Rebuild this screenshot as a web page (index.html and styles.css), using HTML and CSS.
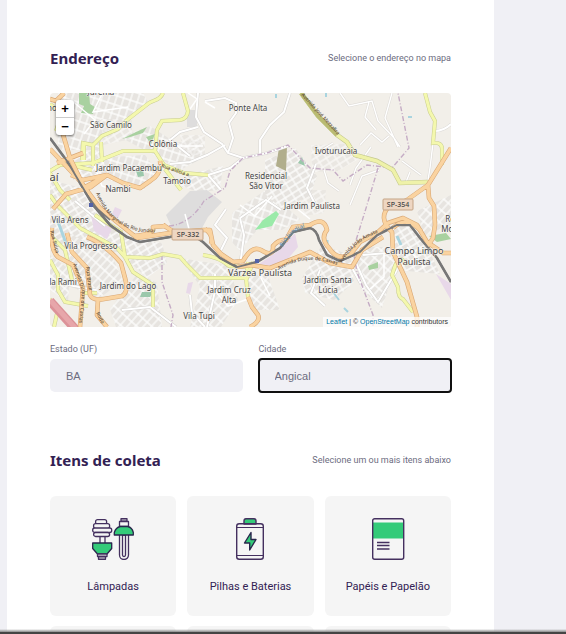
FILE: index.html
```html
<!DOCTYPE html>
<html lang="pt-BR">
<head>
<meta charset="utf-8">
<title>Cadastro do ponto de coleta</title>
<link rel="stylesheet" href="styles.css">
</head>
<body>
<main class="page">
  <form class="form">
    <section>
      <header class="legend">
        <h2>Endereço</h2>
        <span>Selecione o endereço no mapa</span>
      </header>
      <div class="map">
        <svg class="map-canvas" viewBox="50 93 401 234" preserveAspectRatio="xMidYMid slice" role="img" aria-label="Mapa">
          <defs>
            <pattern id="st1" width="7" height="9" patternUnits="userSpaceOnUse" patternTransform="rotate(18)"><rect width="7" height="9" fill="#e5e2de"/><path d="M0 1H7M1 0V9" stroke="#fff" stroke-width="1.3"/></pattern>
            <pattern id="st2" width="8" height="6" patternUnits="userSpaceOnUse" patternTransform="rotate(-32)"><rect width="8" height="6" fill="#e4e1dd"/><path d="M0 1H8M1 0V6" stroke="#fff" stroke-width="1.3"/></pattern>
            <pattern id="st3" width="6" height="10" patternUnits="userSpaceOnUse" patternTransform="rotate(42)"><rect width="6" height="10" fill="#e5e2de"/><path d="M0 1H6M1 0V10" stroke="#fff" stroke-width="1.3"/></pattern>
            <path id="y" d="M163 93C160 101 153 100 149 103L127 120L118 129L102 136L93 145L83 143L82 160M183 93L188 111Q187 119 180 120L162 121L157 130L155 151L123 151L93 163L60 165L50 171M155 151L164 165L184 173L208 175M165 169L181 190M50 104L62 113L56 131M50 173L60 190L70 200M50 195L57 205L80 228L117 248L125 257L150 258L163 254L180 257L187 265L200 278L247 278L253 262M248 262L246 278L248 297M95 215L121 232L125 257L133 272L153 285L153 307M203 255Q219 257 229 266L245 267M50 260L58 275L58 290L65 302L88 306M70 165L92 170M425 93L430 112L435 121L433 143Q442 142 442 149L442 165M407 265Q400 253 395 266L392 275L398 287Q398 298 403 299L413 312M54 327L58 309L50 299M84 160L84 143M93 145V166M101 142L102 162M50 235L65 250L72 280M84 293H97"/>
            <path id="olive" d="M301 93L318 116L337 135L347 142L355 155L377 161L393 170L400 183L428 182"/>
            <path id="o" d="M50 99L56 101L64 93M62 131L70 158L83 185L100 208L117 222L137 238L170 233L203 230L210 230L213 245L221 254L233 262L243 261Q252 245 261 250Q274 258 273 246Q279 239 286 240L293 227L310 225Q324 216 327 230Q320 238 329 248Q337 261 350 255L360 242L377 233L388 223L403 218L417 225L427 242L443 253H451M160 161Q162 174 150 181L140 188L123 183L107 175L83 180L71 175M83 153L57 163M53 209L66 194L91 187L107 175M104 177L83 188M50 149Q69 169 80 181M134 236Q156 234 153 227L166 226M163 225L174 232M237 267L250 265L270 268L310 252L330 263L352 267L362 250L383 237M390 205Q377 218 392 232L393 252L407 282L417 317V327M451 148L428 185L407 200L390 208M428 185L429 198L434 206L435 225L433 238L427 247M52 228Q50 250 58 257L73 265L83 288L80 327M67 233L72 252L87 268L90 295Q93 301 104 299L122 296Q129 292 125 278L121 263Q105 244 87 237M98 300L97 315L107 327M248 297L252 307L258 315Q261 321 250 327M393 228Q406 215 421 231M205 229Q214 235 211 244"/>
            <path id="rail" d="M50 138L67 161L83 188L93 205L110 225L127 237L140 242L170 237L190 233L203 242L220 258L237 267L257 262L280 248L293 232L310 228Q317 230 319 240L327 255L340 261L360 252L377 235L397 225L410 225L420 238L437 258L451 282"/>
            <path id="t1" d="M96 193Q114 240 172 231"/>
            <path id="t2" d="M161 167L196 179"/>
            <path id="t3" d="M301 95L345 143"/>
            <path id="t4" d="M279 270Q307 251 345 268"/>
            <path id="t5" d="M342 263Q354 238 390 229"/>
            <path id="t6" d="M50 231L60 268"/>
            <path id="t7" d="M73 264L82 291L78 335"/>
            <path id="t8" d="M86 267L90 305"/>
            <path id="t9" d="M283 247Q292 227 317 225"/>
            <path id="t10" d="M96 313L106 333"/>
          </defs>
          <rect x="50" y="93" width="401" height="234" fill="#f2efe9"/>
          <g opacity=".85">
            <path fill="url(#st1)" d="M58 93H143L148 102L119 128L101 138L101 150H58ZM97 158L145 155L158 172L144 190L104 179ZM120 137L150 126L176 143L200 139L203 158L180 170L152 154ZM232 213L266 190L300 219L282 230H257L240 251L232 242Z"/>
            <path fill="url(#st2)" d="M76 153L101 150L108 178L73 180ZM186 175L223 166L220 190L199 192L180 186ZM265 160L295 148L317 176L310 196L281 208L265 194ZM50 180L90 190L101 215L128 237L162 243L167 263L147 278L119 252L65 250L50 240ZM322 245L350 255L354 282L334 300L305 293L302 278ZM391 230L411 223L428 248L440 274L397 270Z"/>
            <path fill="url(#st3)" d="M67 232L112 256L123 281L98 299L68 285ZM180 258L230 266L238 300L221 327H190L200 286ZM246 278L267 273L280 310H252ZM365 247L392 247L396 265L382 308L361 289L356 263ZM417 211L451 195V224L424 236ZM50 255L70 270L68 302L50 290ZM138 273L157 283L162 327H116L110 309Z"/>
          </g>
          <g opacity=".55">
            <path fill="url(#st2)" d="M311 145L344 144L362 157L338 171L312 172ZM180 135H205V155H184ZM101 119H132V139L103 145ZM300 190H326L324 213L303 216Z"/>
          </g>
          <path fill="#dedddd" d="M190 191L207 190L222 202L208 217L202 228H172L166 215ZM187 110H197V127H187Z"/>
          <g fill="#e8d8e9"><path d="M91 215L113 227L107 239L94 231ZM259 264L278 251L295 233L298 247L281 267ZM436 274L451 284V300ZM188 283L193 282L190 294L186 293ZM115 207L122 210L118 218L112 214Z"/></g>
          <path fill="#a9d1a0" d="M79 93H89L90 104L95 107L93 114L81 113L84 106L79 104ZM122 139L136 132L147 127L143 133L130 137ZM146 137L155 134L151 144ZM429 236L446 233L451 239L437 242ZM368 266L378 262V268L369 270Z"/>
          <path fill="#b1ae8c" d="M279 148L287 147L286 171L276 166Z"/>
          <path fill="#9aeaa9" d="M255 230L263 220L276 211L279 214L272 226Z"/>
          <path fill="#9bc8ab" d="M298 163L302 157L305 166ZM142 292H153L150 297H140ZM136 171L143 169L144 176L138 177Z"/>
          <path d="M57 219L67 246M397 236L401 245M327 240V247" stroke="#a9d4df" stroke-width="3" fill="none"/>
          <path d="M276 94V98M326 93V97M336 128L331 130M333 292L339 300M344 308L348 312M408 117H412" stroke="#a9d4df" stroke-width="2" fill="none"/>
          <g fill="none" stroke="#d6d4d1" stroke-width="3" stroke-linejoin="round"><path id="w" d="M198 93L196 117L204 132L222 144L228 153L243 158L267 153L288 146M205 101L225 98L236 103V113L229 123L233 138L228 153M198 127L180 132L170 140M170 164L190 162L207 155L225 145M243 158L230 168L208 175L221 190M260 155V140L270 125L284 112L290 93M240 218L244 235L240 266M215 274V291L207 327M240 218L266 200L281 210M316 164L307 188L318 210M434 131Q444 131 451 124M356 263L366 285L378 302L397 270M363 255L388 253M190 295L192 313L205 327M320 270L311 293L325 306M169 139L180 148L190 156M68 285L96 290M122 310L150 307L176 327M75 201L105 226M226 209L215 225L227 238L221 250M351 266L361 284"/></g>
          <use href="#w" fill="none" stroke="#fff" stroke-width="2"/>
          <g fill="none" stroke="#dddad6" stroke-width="2.4"><path id="w2" d="M350 185L356 168L371 147M340 93L349 106L372 101L378 121L394 138L400 147M392 93L385 118L398 147M350 205L362 176L379 170M427 186L430 168M360 145L371 133L382 142L389 136M369 102L365 117L376 130M317 153L333 143M324 170L328 183L339 191M402 161L421 175M410 172L406 182M433 143L430 168"/></g>
          <use href="#w2" fill="none" stroke="#fff" stroke-width="1.400"/>
          <g fill="none" stroke="#fff" stroke-width="1.5"><path d="M177 146H203M188 93L197 99L190 109M71 100L95 120L84 134M102 94L93 112L128 107M94 165L102 186L119 192M185 214L189 229M205 102L215 108M240 205L255 216L272 196M295 207L310 219M384 254V277L370 289M407 247L424 267M210 285L228 306L248 299M261 278L270 296"/></g>
          <path d="M169 226Q190 224 204 201L225 188L230 171L243 158L267 153L288 145L302 160L310 168L333 170L343 181L367 165L392 168L409 148L398 93M378 168L367 205L353 250L357 272L373 315V327M162 255V282L173 315L171 327" fill="none" stroke="#c5acc5" stroke-width="1.4" stroke-dasharray="5 2 1 2"/>
          <use href="#y" fill="none" stroke="#c9cd91" stroke-width="4"/><use href="#y" fill="none" stroke="#f4f8ad" stroke-width="3"/>
          <use href="#olive" fill="none" stroke="#c4c88d" stroke-width="4.600"/><use href="#olive" fill="none" stroke="#eff2a9" stroke-width="3.400"/>
          <path d="M301 93L318 116L337 135" fill="none" stroke="#b9bb73" stroke-width="4"/>
          <path d="M50 301L77 331" stroke="#dc9298" stroke-width="9"/><path d="M50 300L77 330" stroke="#e7a6aa" stroke-width="5"/>
          <use href="#rail" fill="none" stroke="#777" stroke-width="2.600"/><use href="#rail" fill="none" stroke="#b2b1b0" stroke-width="1" stroke-dasharray="5 5"/>
          <use href="#o" fill="none" stroke="#d9a876" stroke-width="4.600" stroke-linejoin="round"/><use href="#o" fill="none" stroke="#fad3a0" stroke-width="3.400" stroke-linejoin="round"/>
          <use href="#rail" fill="none" stroke="#777" stroke-width="1.800"/>
          <path d="M91 203L110 220M96 207L113 228M85 192L98 210" stroke="#777" stroke-width="1.500"/>
          <path d="M89 203h4v4h-4zM255 259h4v4h-4z" fill="#5262a8"/>
          <g fill="#eed6c2" stroke="#c5a485"><rect x="172" y="229" width="31" height="11" rx="1"/><rect x="383" y="199" width="30" height="11" rx="1"/></g>
          <g class="street">
            <text><textPath href="#t1">Avenida Marginal do Rio Jundiaí</textPath></text><text><textPath href="#t2">Rua aldeia a</textPath></text><text><textPath href="#t3">Avenida José Mezzalira</textPath></text><text><textPath href="#t4">Avenida Duque de Caxias</textPath></text><text><textPath href="#t5">Avenida João Amato</textPath></text><text><textPath href="#t6">Rua Suíça</textPath></text><text><textPath href="#t7">Avenida Duque de Caxias</textPath></text><text><textPath href="#t8">Rua Brasil</textPath></text><text class="water"><textPath href="#t9">Rio Jundiaí</textPath></text><text><textPath href="#t10">Rodo</textPath></text>
          </g>
          <g class="place">
            <text x="101" y="95">Jurema</text><text x="248" y="111">Ponte Alta</text><text x="111" y="128">São Camilo</text><text x="163" y="147">Colônia</text><text x="336" y="154">Ivoturucaia</text><text x="129" y="171">Jardim Pacaembú</text><text x="177" y="184">Tamoio</text><text x="118" y="192">Nambi</text><text x="266" y="179">Residencial</text><text x="266" y="189">São Vitor</text><text x="312" y="209">Jardim Paulista</text><text x="70" y="223">Vila Arens</text><text x="91" y="249">Vila Progresso</text><text x="63" y="285">la Rami</text><text x="128" y="289">Jardim do Lago</text><text x="229" y="293">Jardim Cruz</text><text x="229" y="303">Alta</text><text x="199" y="319">Vila Tupi</text><text x="328" y="283">Jardim Santa</text><text x="328" y="293">Lúcia</text><text x="414" y="254" class="town">Campo Limpo</text><text x="414" y="265" class="town">Paulista</text><text x="260" y="276" class="town">Várzea Paulista</text><text x="54" y="181" class="city">aí</text><text x="450" y="222">Re</text><text x="449" y="232">Mor</text><text x="52" y="111">no</text><text x="188" y="237" class="shield">SP-332</text><text x="398" y="207" class="shield">SP-354</text>
          </g>
        </svg>
        <div class="zoom"><button type="button" aria-label="Aproximar">+</button><button type="button" aria-label="Afastar">−</button></div>
        <div class="credits"><a href="#">Leaflet</a> | © <a href="#">OpenStreetMap</a> contributors</div>
      </div>
      <div class="fields">
        <div class="field">
          <label for="uf">Estado (UF)</label>
          <select id="uf"><option>BA</option></select>
        </div>
        <div class="field">
          <label for="city">Cidade</label>
          <select id="city" class="active"><option>Angical</option></select>
        </div>
      </div>
    </section>
    <section class="collect">
      <header class="legend">
        <h2>Itens de coleta</h2>
        <span>Selecione um ou mais itens abaixo</span>
      </header>
      <ul class="items">
        <li>
          <svg class="icon" viewBox="0 0 42 42" aria-hidden="true">
            <g fill="#f5f5f5" stroke="#44305f" stroke-width="1.3" stroke-linejoin="round">
              <path d="M8 18h5v8H8z"/>
              <rect x="3.600" y="1.600" width="11" height="5" rx="2"/><rect x="1.600" y="5.600" width="16" height="5" rx="2"/><rect x=".7" y="10" width="19" height="4.500" rx="2"/><rect x="1.600" y="14.500" width="16" height="4" rx="2"/>
              <path fill="#34cb79" stroke="#29264c" d="M.7 25h19v5.500L15 36H5.500L.7 30.500z"/>
              <path d="M5.500 36h9.500v2.500H5.500z"/><path fill="#aaa0b3" d="M6.500 38.500h7v2.800h-7z"/>
              <path d="M27.500 16v21a4.500 4.500 0 0 0 9 0V16z"/><path d="M30.500 17v20a1.500 1.500 0 0 0 3 0V17z"/>
              <path fill="#aaa0b3" d="M29 3.500V.7h6v2.800z"/><path d="M27.500 8.500v-5h9v5z"/>
              <path fill="#34cb79" stroke="#29264c" d="M22.300 17v-2.500q1.500-5 6-6h7.400q4.500 1 5.600 6V17z"/>
            </g>
          </svg>
          <span>Lâmpadas</span>
        </li>
        <li>
          <svg class="icon" viewBox="0 0 42 42" aria-hidden="true">
            <g fill="none" stroke="#44305f" stroke-width="1.400" stroke-linejoin="round">
              <path fill="#34cb79" d="M15 6V3q0-2.300 2-2.300h8q2 0 2 2.300v3z"/>
              <rect x="7.700" y="5.700" width="26.600" height="35.600" rx="2.500"/><path d="M8 9.500h26M8 37.500h26" stroke-width="1"/>
              <path fill="#34cb79" stroke="#29264c" d="M22 14.500L15.500 25h5.200v7L27 21.500H22z"/>
            </g>
          </svg>
          <span>Pilhas e Baterias</span>
        </li>
        <li>
          <svg class="icon" viewBox="0 0 42 42" aria-hidden="true">
            <path fill="#34cb79" d="M5.500 4.500h31v16h-31z"/>
            <rect x="5.700" y=".7" width="31" height="40.600" rx="2" fill="none" stroke="#44305f" stroke-width="1.400"/>
            <path d="M10 24.500h12.500M10 27.500h12.500M10 31h12.500" stroke="#44305f" stroke-width="1.300"/>
          </svg>
          <span>Papéis e Papelão</span>
        </li>
        <li></li><li></li><li></li>
      </ul>
    </section>
  </form>
</main>
<div class="window-edge"></div>
</body>
</html>
```
FILE: styles.css
```css
* { box-sizing: border-box; }

body {
  margin: 0;
  background: #f0f0f5;
  color: #6c6c80;
  font-family: Roboto, "Liberation Sans", sans-serif;
}

.page {
  height: 100vh;
  overflow: hidden;
  margin: 0 72px 0 7px;
  padding: 46px 43px 0;
  background: #fff;
}

.legend {
  display: flex;
  align-items: center;
  justify-content: space-between;
  height: 24px;
  margin-bottom: 23px;
  font-size: 9px;
}

.legend h2 {
  margin: 0;
  color: #322153;
  font: bold 15px/24px "Noto Sans", sans-serif;
}

.map {
  position: relative;
  height: 234px;
  overflow: hidden;
  border-radius: 4px;
}

.map-canvas {
  display: block;
  width: 100%;
  height: 100%;
}

.place {
  fill: #444;
  stroke: #f8f6f2;
  stroke-width: 1px;
  paint-order: stroke;
  font: 8px "Noto Sans", sans-serif;
  text-anchor: middle;
}

.place .town { font-size: 9px; }
.place .city { font-size: 11px; }

.place .shield {
  font-size: 7px;
  font-weight: 500;
  stroke: none;
}

.street {
  fill: #5c4c3a;
  font: 500 5px "Noto Sans", sans-serif;
}

.street .water { fill: #5d91ba; font-size: 6px; }

.zoom {
  position: absolute;
  top: 7px;
  left: 6px;
  display: grid;
  width: 18px;
  border-radius: 3px;
  background: #fff;
  box-shadow: 0 1px 3px rgba(0, 0, 0, .6);
}

.zoom button {
  height: 17px;
  padding: 0;
  border: 0;
  background: none;
  color: #000;
  font: bold 13px/17px "Liberation Sans", sans-serif;
}

.zoom button + button {
  height: 18px;
  border-top: 1px solid #ccc;
}

.credits {
  position: absolute;
  right: 0;
  bottom: 0;
  padding: 0 3px;
  background: rgba(255, 255, 255, .7);
  color: #333;
  font: 7px/10px "Liberation Sans", sans-serif;
}

.credits a {
  color: #0078a8;
  text-decoration: none;
}

.fields {
  display: grid;
  grid-template-columns: 1fr 1fr;
  gap: 16px;
  margin-top: 16px;
}

.field label {
  display: block;
  margin-bottom: 4px;
  font-size: 9px;
  line-height: 12px;
}

.field select {
  display: block;
  width: 100%;
  height: 33px;
  padding: 0 16px;
  appearance: none;
  border: 0;
  border-radius: 5px;
  background: #f0f0f5;
  color: #6c6c80;
  font: 11px "Liberation Sans", sans-serif;
}

.field .active {
  border-radius: 3px;
  outline: 2px solid #101010;
  outline-offset: -1px;
}

.collect { margin-top: 56px; }
.collect .legend { margin-bottom: 24px; }

.items {
  display: grid;
  grid-template-columns: repeat(3, 1fr);
  gap: 10px 11px;
  margin: 0;
  padding: 0;
  list-style: none;
}

.items li {
  display: flex;
  flex-direction: column;
  align-items: center;
  gap: 19px;
  height: 120px;
  padding-top: 22px;
  border-radius: 6px;
  background: #f5f5f5;
  color: #322153;
  font-size: 11px;
  line-height: 16px;
}

.icon {
  width: 42px;
  height: 42px;
}

.window-edge {
  position: fixed;
  right: 0;
  bottom: 0;
  left: 0;
  height: 5px;
  background: linear-gradient(transparent, #888 60%, #444 60%);
}
```
